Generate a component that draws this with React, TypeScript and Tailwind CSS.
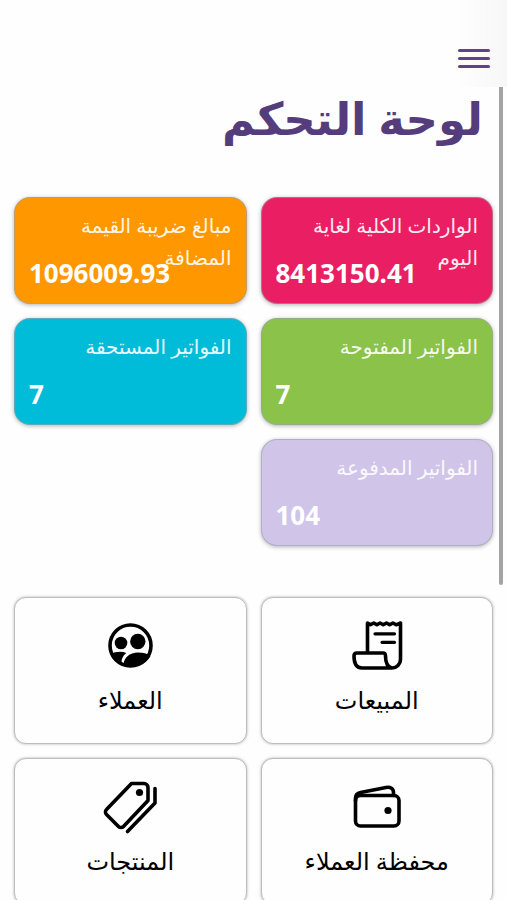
import type { ReactNode } from 'react';

const stats = [
  { label: 'الواردات الكلية لغاية اليوم', value: '8413150.41', color: 'bg-[#e91e63]' },
  { label: 'مبالغ ضريبة القيمة المضافة', value: '1096009.93', color: 'bg-[#ff9800]' },
  { label: 'الفواتير المفتوحة', value: '7', color: 'bg-[#8bc34a]' },
  { label: 'الفواتير المستحقة', value: '7', color: 'bg-[#00bcd8]' },
  { label: 'الفواتير المدفوعة', value: '104', color: 'bg-[#d1c4e9]' },
];

function Icon({ children }: { children: ReactNode }) {
  return (
    <svg
      viewBox="0 0 60 56"
      className="h-14 w-[60px]"
      fill="none"
      stroke="currentColor"
      strokeWidth="3.6"
      strokeLinecap="round"
      strokeLinejoin="round"
      aria-hidden="true"
    >
      {children}
    </svg>
  );
}

function ReceiptIcon() {
  return (
    <Icon>
      <path d="M20.500 34V5l3 1.800 3.200-1.800 3.200 1.800 3.200-1.800 3.200 1.800 3.200-1.800 3.200 1.800 3.200-1.800 3.200 1.800 4.400-1.800v36.500a8.500 8.500 0 0 1-8.500 8.500H15c-5.500 0-8-4-8-12 0-2 1-3 3-3h26c2 0 2.500 1 2.500 3 0 7 1.500 11 6.500 12" />
      <path d="M28 15.800H47.500M35 24.300h12.500" strokeWidth="3.200" />
    </Icon>
  );
}

function CustomersIcon() {
  return (
    <Icon>
      <circle cx="30.500" cy="27.500" r="20.500" />
      <circle cx="21" cy="25" r="6.300" fill="currentColor" stroke="none" />
      <circle cx="37.800" cy="23.500" r="7.700" fill="currentColor" stroke="none" />
      <path
        d="M10.500 36c5-2.500 11-3 15.800-1-3.300 2.500-5 6-4.800 9.500l-1 1.500c-5-2-8-5-10-10ZM23.500 46.500c.5-7 6-12 14.500-12 5 0 9.500 1 12.500 3.500-4 7-10.500 10.500-19.500 10.500-3 0-5.500-.5-7.500-2Z"
        fill="currentColor"
        stroke="none"
      />
    </Icon>
  );
}

function WalletIcon() {
  return (
    <Icon>
      <rect x="8.500" y="16.500" width="43.500" height="30.500" rx="5" />
      <path d="M8.500 22v-3c0-3 1.500-5 5-5.600L39 8.500c4.500-.8 7.500 1 7.500 5v3" />
      <circle cx="41" cy="31.500" r="3.600" fill="currentColor" stroke="none" />
    </Icon>
  );
}

function TagsIcon() {
  return (
    <Icon>
      <path d="M31.500 4.500H44a4 4 0 0 1 4 4v13L23.500 47.500a3.500 3.500 0 0 1-5 0L6.500 35.500a3.500 3.500 0 0 1 0-5Z" />
      <path d="M55 9.500v14.500L27.500 52.500" />
      <circle cx="39.500" cy="13.500" r="3.600" fill="currentColor" stroke="none" />
    </Icon>
  );
}

const sections = [
  { label: 'المبيعات', icon: <ReceiptIcon /> },
  { label: 'العملاء', icon: <CustomersIcon /> },
  { label: 'محفظة العملاء', icon: <WalletIcon /> },
  { label: 'المنتجات', icon: <TagsIcon /> },
];

function StatCard({ label, value, color }: { label: string; value: string; color: string }) {
  return (
    <div
      className={`relative min-h-[107px] rounded-2xl border border-gray-400/60 px-3.5 pt-3 shadow-[0_1px_4px_rgba(0,0,0,0.3)] text-white ${color}`}
    >
      <p className="text-xl leading-8 opacity-90">{label}</p>
      {/* value stays pinned to the corner even when the label wraps */}
      <p className="absolute bottom-3 left-3.5 text-[26px] leading-9 font-bold">{value}</p>
    </div>
  );
}

export default function App() {
  return (
    <div
      dir="rtl"
      className="relative flex h-screen flex-col bg-[#fefefe] font-['Noto_Sans','DejaVu_Sans',sans-serif] text-black"
    >
      <header className="flex h-[87px] shrink-0 items-end bg-linear-to-r from-[#fefefe] from-90% to-[#f7f7f7] px-[17px] pb-[19px]">
        <button type="button" aria-label="القائمة" className="flex w-8 flex-col gap-[5px]">
          <span className="h-[3px] w-full rounded-full bg-[#5e4483]" />
          <span className="h-[3px] w-full rounded-full bg-[#5e4483]" />
          <span className="h-[3px] w-full rounded-full bg-[#5e4483]" />
        </button>
      </header>

      <main className="flex-1 overflow-y-auto px-3.5 [scrollbar-width:none]">
        <h1 className="px-2.5 text-[45px] leading-[62px] font-bold text-[#543c7d]">لوحة التحكم</h1>

        <section className="mt-12 grid grid-cols-2 gap-3.5">
          {stats.map((s) => (
            <StatCard key={s.label} {...s} />
          ))}
        </section>

        <nav className="mt-[51px] grid grid-cols-2 gap-3.5 pb-3.5">
          {sections.map((s) => (
            <a
              key={s.label}
              href="#"
              className="flex min-h-[147px] flex-col items-center rounded-xl border border-[#bdbdbd] bg-[#fefefe] pt-5 shadow-[0_0_3px_rgba(0,0,0,0.3)]"
            >
              {s.icon}
              <span className="mt-2 text-2xl leading-9">{s.label}</span>
            </a>
          ))}
        </nav>
      </main>

      {/* scroll thumb */}
      <div className="absolute top-[87px] right-[4px] h-[498px] w-1 rounded-b-full bg-[#a3a3a3]" />
    </div>
  );
}
